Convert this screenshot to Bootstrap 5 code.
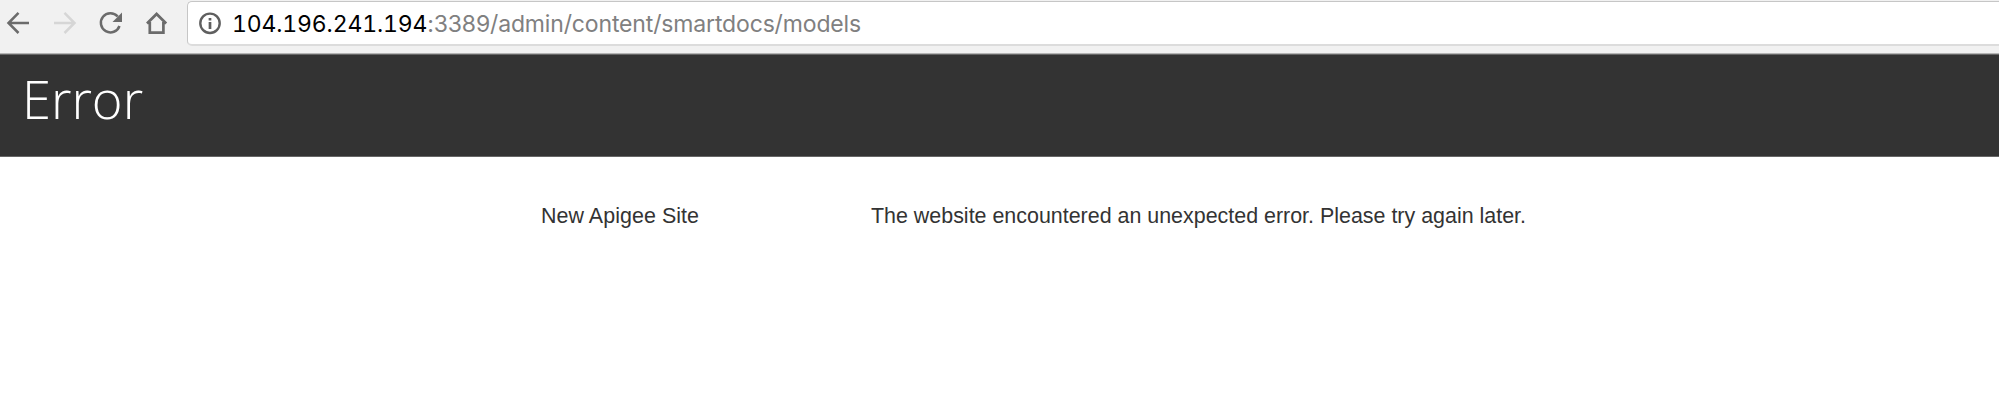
<!DOCTYPE html>
<html lang="en">
<head>
<meta charset="utf-8">
<title>Error</title>
<link href="https://cdn.jsdelivr.net/npm/bootstrap@5.3.0/dist/css/bootstrap.min.css" rel="stylesheet">
<style>
body{background:#fff;color:#333;overflow:hidden}
.toolbar{height:54px;background:#f1f1f1;border-bottom:1px solid #b5b5b5}
.toolbar svg{display:block;flex:none}
.nav-icons{width:187px;height:46px}
.address{height:45px;border:1px solid #c6c6c6;border-bottom:2px solid #dcdcdc;border-right:0;border-radius:5px 0 0 5px;background:#fff;font:400 23px/44px Inter,sans-serif;color:#808080;white-space:nowrap;margin-top:1px}
.host{color:#000;font-feature-settings:"tnum";letter-spacing:-.15px}
.path{letter-spacing:-.15px}
.url{margin-left:8px}
.page-head{height:103px;background:#333;border-top:1px solid #666;border-bottom:1px solid #666;padding:7px 0 0 22px}
.page-head h1{font:300 52.500px/74px "Open Sans",sans-serif;color:#fff}
.page-body{font:21.430px/26px "Liberation Sans",Arial,sans-serif;padding:46px 0 0 541px;white-space:nowrap}
.site-name{width:330px;flex:none;letter-spacing:.06px}
</style>
</head>
<body>
<header class="toolbar d-flex align-items-start">
<svg class="nav-icons" viewBox="0 0 187 46" fill="none" stroke="#6b6b6b" stroke-width="2.5">
<path d="M29 23H9M18.5 12.8L8.5 23l10 10"/>
<path stroke="#d6d6d6" d="M54 23h20M64.5 12.8L74.500 23l-10 10"/>
<path d="M117.700 16.500A9.600 9.600 0 1 0 119.500 26"/>
<path fill="#6b6b6b" stroke="none" d="M122 12.500v9.500h-9.500z"/>
<path stroke-width="2.700" d="M147 23.500l9.600-9.500 9.600 9.500M149.800 22v10.700h13.600V22"/>
</svg>
<div class="address d-flex flex-grow-1">
<svg class="ms-2" width="28" height="42" viewBox="196 2 28 42" fill="none"><circle cx="210" cy="23.300" r="9.700" stroke="#5f5f5f" stroke-width="2.400"/><path stroke="#5f5f5f" stroke-width="2.700" d="M210 22v7M210 18v2.500"/></svg>
<div class="url"><span class="host">104.196.241.194</span><span class="path">:3389/admin/content/smartdocs/models</span></div>
</div>
</header>
<div class="page-head"><h1 class="mb-0">Error</h1></div>
<main class="page-body d-flex">
<div class="site-name">New Apigee Site</div>
<div>The website encountered an unexpected error. Please try again later.</div>
</main>
<script src="https://cdn.jsdelivr.net/npm/bootstrap@5.3.0/dist/js/bootstrap.bundle.min.js"></script>
</body>
</html>
